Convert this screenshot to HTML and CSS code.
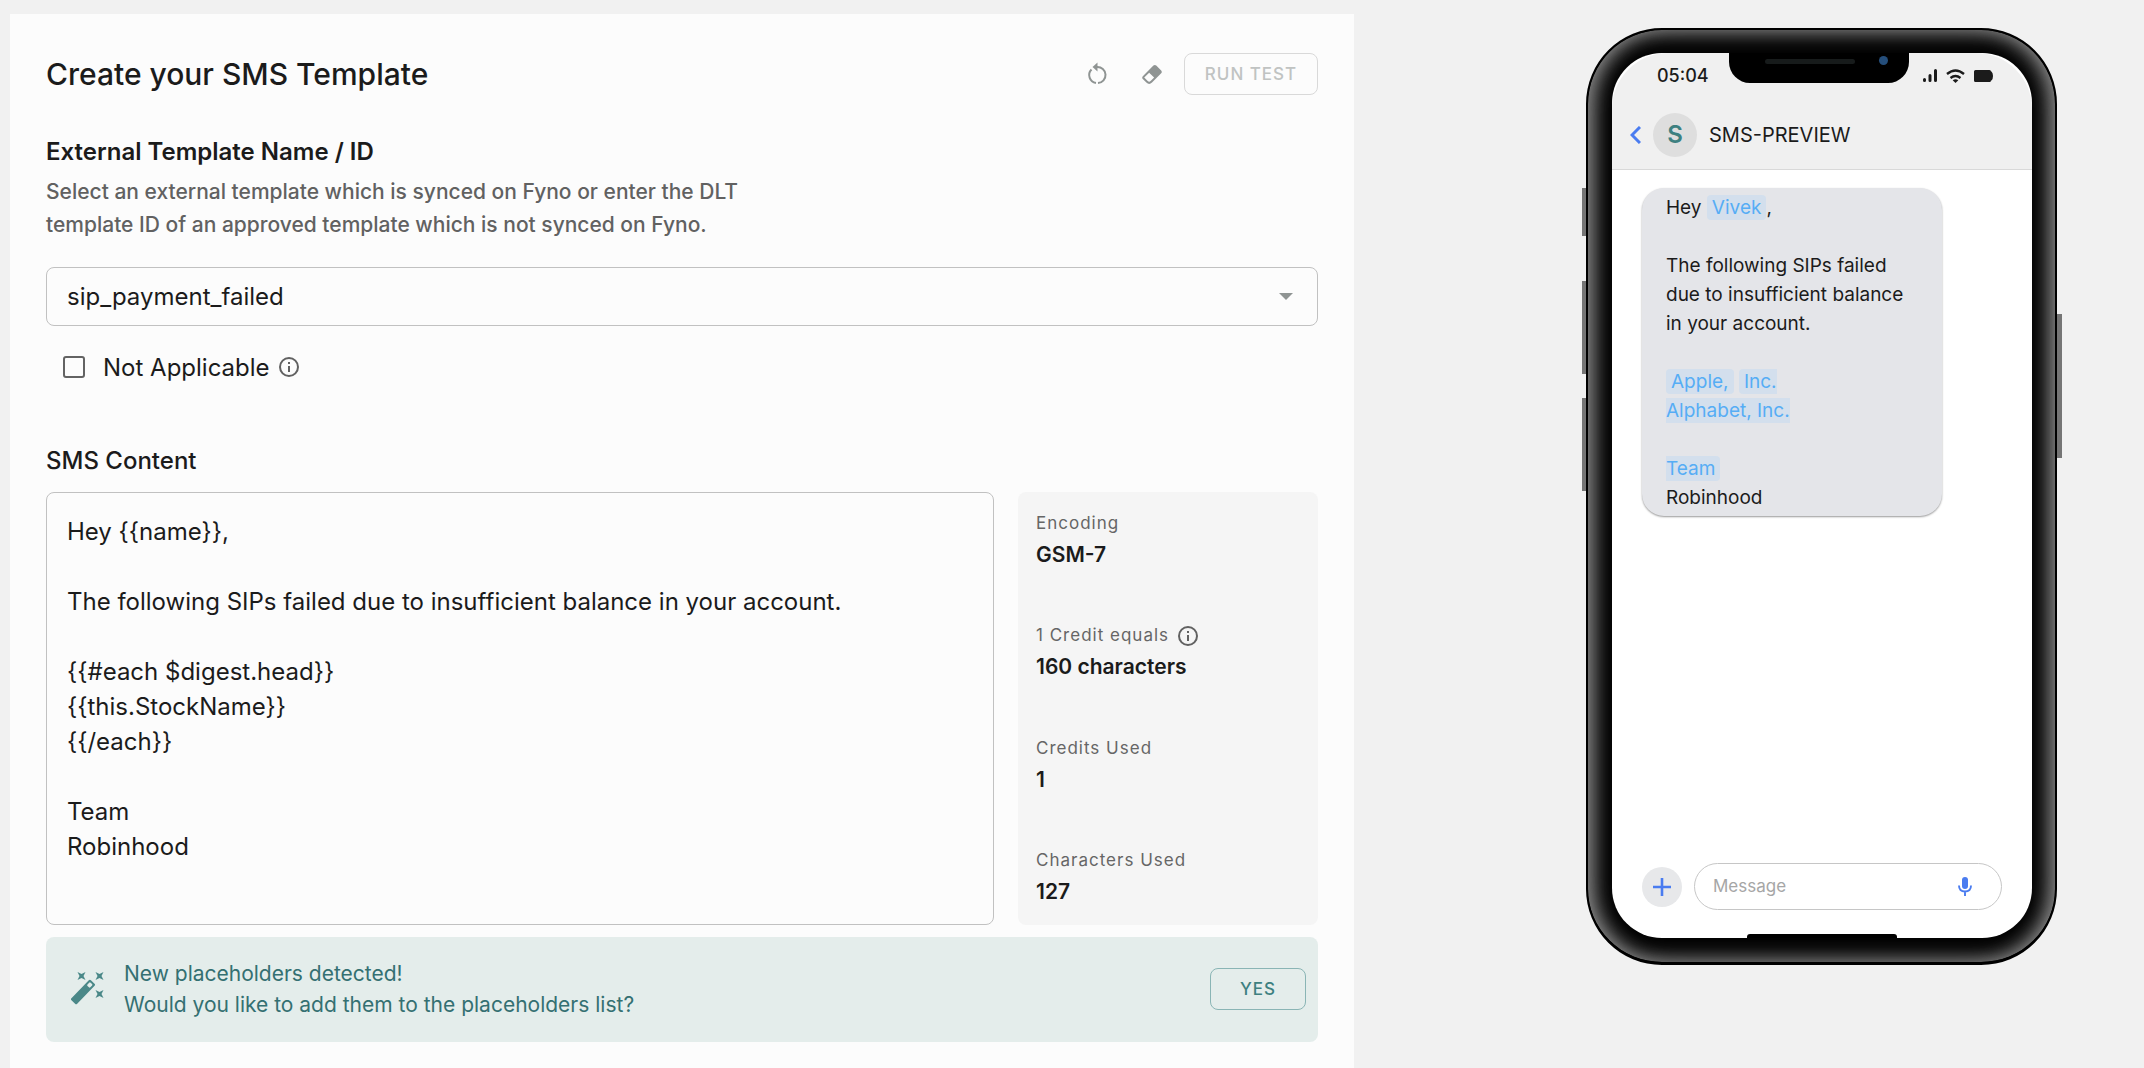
FILE: index.html
```html
<!DOCTYPE html>
<html lang="en">
<head>
<meta charset="utf-8">
<title>Create your SMS Template</title>
<link rel="stylesheet" href="styles.css">
</head>
<body>
<div class="page">
  <main class="editor">
    <header class="editor-header">
      <h1 class="title">Create your SMS Template</h1>
      <div class="actions">
        <button class="icon-button" type="button" aria-label="Reset">
          <svg class="icon" viewBox="0 0 24 24"><g fill="none" stroke="currentColor" stroke-width="2"><path d="M5.500 7.500A8 8 0 0 0 10 21"/><path d="M12 21A8 8 0 0 0 11 5"/></g><path d="M11.500 0.500v9L6.500 5z" fill="currentColor"/></svg>
        </button>
        <button class="icon-button" type="button" aria-label="Clear">
          <svg class="icon" viewBox="0 0 24 24" fill="currentColor"><path d="M16.24 3.56l4.95 4.94c.78.79.78 2.05 0 2.84L12 20.53a4.008 4.008 0 0 1-5.66 0L2.81 17c-.78-.79-.78-2.05 0-2.84l10.6-10.6c.79-.78 2.05-.78 2.83 0M4.22 15.58l3.54 3.53c.78.79 2.04.79 2.83 0l3.53-3.53-4.95-4.95z"/></svg>
        </button>
        <button class="button button-test" type="button" disabled>RUN TEST</button>
      </div>
    </header>

    <section class="template-section">
      <h2 class="section-title"><label for="template">External Template Name / ID</label></h2>
      <p class="section-text">Select an external template which is synced on Fyno or enter the DLT template ID of an approved template which is not synced on Fyno.</p>
      <div class="select-wrap">
        <select class="select" id="template"><option>sip_payment_failed</option></select>
        <svg class="select-arrow" viewBox="0 0 14 7" fill="currentColor"><path d="M0 0h14L7 7z"/></svg>
      </div>
      <div class="check-row">
        <input class="checkbox" type="checkbox" id="not-applicable">
        <label for="not-applicable">Not Applicable</label>
        <svg class="info" viewBox="0 0 20 20"><circle cx="10" cy="10" r="9" fill="none" stroke="currentColor" stroke-width="2"/><path d="M9 9h2v6H9zM9 5h2v2H9z" fill="currentColor"/></svg>
      </div>
    </section>

    <section class="content-section">
      <h2 class="section-title content-title"><label for="content">SMS Content</label></h2>
      <div class="content-grid">
        <textarea class="content-box" id="content" spellcheck="false">Hey {{name}},

The following SIPs failed due to insufficient balance in your account.

{{#each $digest.head}}
{{this.StockName}}
{{/each}}

Team
Robinhood</textarea>
        <dl class="stats">
          <div><dt>Encoding</dt><dd>GSM-7</dd></div>
          <div><dt>1 Credit equals <svg class="info" viewBox="0 0 20 20"><circle cx="10" cy="10" r="9" fill="none" stroke="currentColor" stroke-width="2"/><path d="M9 9h2v6H9zM9 5h2v2H9z" fill="currentColor"/></svg></dt><dd>160 characters</dd></div>
          <div><dt>Credits Used</dt><dd>1</dd></div>
          <div><dt>Characters Used</dt><dd>127</dd></div>
        </dl>
      </div>
      <div class="notice">
        <svg class="wand" viewBox="0 0 34 34" fill="currentColor"><g transform="translate(12 20) rotate(-46)"><rect x="-14" y="-4" width="28" height="8" rx="1.500"/><rect x="7.500" y="-2" width="4.500" height="4" rx="1" fill="#e4edeb"/></g><path d="M6.500 0l4 2 4-2-2 4 2 4-4-2-4 2 2-4zM24.500 0l4 2 4-2-2 4 2 4-4-2-4 2 2-4zM24.500 18l4 2 4-2-2 4 2 4-4-2-4 2 2-4z"/></svg>
        <p class="notice-text">New placeholders detected!<br>Would you like to add them to the placeholders list?</p>
        <button class="button button-yes" type="button">YES</button>
      </div>
    </section>
  </main>

  <aside class="preview">
    <div class="phone">
      <span class="key key-mute"></span>
      <span class="key key-up"></span>
      <span class="key key-down"></span>
      <span class="key key-power"></span>
      <div class="screen">
        <div class="notch"><span class="speaker"></span><span class="camera"></span></div>
        <header class="screen-header">
          <div class="status">
            <span>05:04</span>
            <div class="status-icons">
              <svg class="signal" viewBox="0 0 14 13" fill="none" stroke="currentColor" stroke-width="3" stroke-linecap="round"><path d="M1.500 10.500v1M7 6.500v5M12.500 1.500v10"/></svg>
              <svg class="wifi" viewBox="0 0 19 14"><path d="M1 5q8.500-7 17 0M4.500 9q5-3.800 10 0" fill="none" stroke="currentColor" stroke-width="2.400"/><path d="M6.700 11.200q2.800-2 5.600 0L9.500 14z" fill="currentColor"/></svg>
              <svg class="battery" viewBox="0 0 19 12" fill="currentColor"><path d="M1.500 0H15.500q1.500 0 1.500 1.500h.5Q19 3 19 6T17.500 10.500h-.5Q17 12 15.500 12H1.500Q0 12 0 10.500v-9Q0 0 1.500 0z"/></svg>
            </div>
          </div>
          <div class="contact">
            <button class="back" type="button" aria-label="Back"><svg viewBox="0 0 11 18" fill="none" stroke="currentColor" stroke-width="3"><path d="M10 1L2 9l8 8"/></svg></button>
            <span class="avatar">S</span>
            <span>SMS-PREVIEW</span>
          </div>
        </header>
        <div class="thread">
          <p class="bubble">Hey <mark>Vivek</mark>,

The following SIPs failed due to insufficient balance in your account.

<mark>Apple,</mark> <mark>Inc.
Alphabet, Inc.

Team</mark>
Robinhood</p>
        </div>
        <div class="composer">
          <button class="add" type="button" aria-label="Add"><svg viewBox="0 0 18 18" stroke="currentColor" stroke-width="2.600"><path d="M9 0v18M0 9h18"/></svg></button>
          <div class="message-wrap">
            <input class="message" type="text" placeholder="Message" aria-label="Message">
            <svg class="mic" viewBox="0 0 14 19"><rect x="4" y="0" width="6" height="12" rx="3" fill="currentColor"/><path d="M1 8.500q0 6 6 6t6-6M7 14.500V19" fill="none" stroke="currentColor" stroke-width="1.900"/></svg>
          </div>
        </div>
        <span class="home-bar"></span>
      </div>
    </div>
  </aside>
</div>
</body>
</html>
```
FILE: styles.css
```css
* {
  box-sizing: border-box;
}

body {
  margin: 0;
  background: #f1f1f1;
  color: #1b1b1b;
  font-family: Inter, "Liberation Sans", sans-serif;
  font-size: 24px;
}

h1, h2, p, dl, dd {
  margin: 0;
}

button, input, select, textarea {
  font: inherit;
  color: inherit;
}

svg {
  display: block;
  flex: none;
}

.page {
  display: grid;
  grid-template-columns: 1344fr 790fr;
  min-height: 100vh;
  padding: 14px 0 0 10px;
}

/* Editor */
.editor {
  padding: 39px 36px 24px;
  background: #fcfcfc;
}

.editor-header {
  display: flex;
  justify-content: space-between;
  align-items: center;
}

.title {
  font-size: 30px;
  font-weight: 500;
  line-height: 42px;
}

.actions {
  display: flex;
  align-items: center;
}

.icon-button {
  padding: 0;
  margin-right: 20px;
  border: 0;
  background: none;
  color: #8f9493;
}

.icon-button:first-child {
  margin-right: 30px;
}

.icon {
  width: 24px;
  height: 24px;
}

.button {
  height: 42px;
  padding: 0;
  border: 1px solid;
  border-radius: 8px;
  background: none;
  font-size: 17px;
  font-weight: 500;
  letter-spacing: 1px;
}

.button-test {
  width: 134px;
  border-color: #d9d9d9;
  color: #c0c3c2;
}

.button-yes {
  width: 96px;
  margin-left: auto;
  border-color: #8ab5b5;
  color: #3d8080;
}

.template-section {
  margin-top: 39px;
}

.section-title {
  font-size: 24px;
  font-weight: 600;
  line-height: 36px;
}

.section-text {
  max-width: 720px;
  margin-top: 5px;
  color: #616161;
  font-size: 21px;
  font-weight: 500;
  line-height: 33px;
}

.select-wrap {
  display: grid;
  align-items: center;
  margin-top: 26px;
}

.select-wrap > * {
  grid-area: 1 / 1;
}

.select {
  width: 100%;
  height: 59px;
  padding: 0 20px;
  border: 1px solid #c1c1c1;
  border-radius: 8px;
  appearance: none;
  background: none;
}

.select-arrow {
  width: 14px;
  height: 7px;
  margin-right: 25px;
  justify-self: end;
  color: #8f9493;
  pointer-events: none;
}

.check-row {
  display: flex;
  align-items: center;
  height: 36px;
  margin-top: 23px;
  padding-left: 17px;
}

.checkbox {
  width: 22px;
  height: 22px;
  margin: 0 18px 0 0;
  border: 2px solid #636363;
  border-radius: 3px;
  appearance: none;
}

.info {
  width: 20px;
  height: 20px;
  margin-left: 9px;
  color: #616161;
}

.content-section {
  margin-top: 58px;
}

.content-title {
  font-weight: 500;
}

.content-grid {
  display: grid;
  grid-template-columns: 1fr 300px;
  gap: 24px;
  margin-top: 13px;
}

.content-box {
  display: block;
  min-height: 433px;
  padding: 21px 20px;
  border: 1px solid #c1c1c1;
  border-radius: 8px;
  outline: 0;
  background: none;
  line-height: 35px;
  resize: none;
}

.stats {
  display: flex;
  flex-direction: column;
  justify-content: space-between;
  padding: 16px 18px 18px;
  border-radius: 8px;
  background: #f5f5f5;
}

.stats dt {
  display: flex;
  align-items: center;
  color: #666;
  font-size: 17px;
  line-height: 31px;
  letter-spacing: 1px;
}

.stats dd {
  font-size: 21px;
  font-weight: 600;
  line-height: 31px;
}

.notice {
  display: flex;
  align-items: center;
  gap: 19px;
  margin-top: 12px;
  padding: 21px 12px 22px 25px;
  border-radius: 8px;
  background: #e4edeb;
  color: #347072;
}

.notice-text {
  font-size: 21px;
  line-height: 31px;
}

.wand {
  width: 34px;
  height: 34px;
  color: #4a8888;
}

/* Phone preview */
.preview {
  display: flex;
  justify-content: flex-end;
  align-items: flex-start;
  padding: 14px 87px 24px;
}

.phone {
  position: relative;
  width: 471px;
  padding: 23px 23px 24px 24px;
  border: 2px solid #000;
  border-bottom-width: 3px;
  border-radius: 76px;
  background: #000;
  box-shadow: inset 0 0 24px #8a8a8a, inset 12px 0 24px -12px #999, inset -12px 0 24px -12px #999;
}

.key {
  position: absolute;
  left: -6px;
  width: 4px;
  background: #757575;
}

.key-mute {
  top: 158px;
  height: 48px;
}

.key-up {
  top: 251px;
  height: 93px;
}

.key-down {
  top: 368px;
  height: 93px;
}

.key-power {
  top: 284px;
  right: -7px;
  left: auto;
  width: 5px;
  height: 144px;
}

.screen {
  position: relative;
  display: flex;
  flex-direction: column;
  min-height: 885px;
  overflow: hidden;
  border-radius: 50px;
  background: #fff;
}

.notch {
  position: absolute;
  top: 0;
  left: 117px;
  width: 180px;
  height: 30px;
  border-radius: 0 0 21px 21px;
  background: #000;
}

.speaker {
  position: absolute;
  top: 6px;
  left: 36px;
  width: 90px;
  height: 5px;
  border-radius: 3px;
  background: #171b1b;
}

.camera {
  position: absolute;
  top: 3px;
  left: 150px;
  width: 9px;
  height: 9px;
  border-radius: 50%;
  background: #254e7b;
}

.screen-header {
  padding: 7px 0 12px;
  border-bottom: 1px solid #d9d9d9;
  border-radius: 56px 56px 0 0;
  background: #f0f0f0;
}

.status {
  display: flex;
  justify-content: space-between;
  align-items: center;
  padding: 0 39px 0 45px;
  font-size: 18px;
  font-weight: 500;
  line-height: 31px;
}

.status-icons {
  display: flex;
  align-items: center;
  gap: 9px;
}

.signal {
  width: 14px;
  height: 13px;
}

.wifi {
  width: 19px;
  height: 14px;
}

.battery {
  width: 19px;
  height: 12px;
}

.contact {
  display: flex;
  align-items: center;
  gap: 12px;
  margin-top: 22px;
  padding-left: 18px;
  font-size: 20px;
}

.back {
  width: 11px;
  padding: 0;
  border: 0;
  background: none;
  color: #4a7cf0;
}

.avatar {
  width: 44px;
  height: 44px;
  border-radius: 50%;
  background: #dedede;
  color: #3d8080;
  font-size: 24px;
  font-weight: 600;
  line-height: 44px;
  text-align: center;
}

.thread {
  flex: 1;
  padding: 18px 30px;
}

.bubble {
  width: 300px;
  padding: 5px 24px 4px;
  border-radius: 22px;
  background: #e4e5e9;
  box-shadow: 0 1px 2px #999;
  font-size: 19px;
  line-height: 29px;
  white-space: pre-wrap;
}

.bubble mark {
  padding: 1px 5px;
  border-radius: 4px;
  background: #d3dfed;
  color: #56adf5;
}

.composer {
  display: flex;
  align-items: center;
  gap: 12px;
  padding: 0 30px 28px;
}

.add {
  display: grid;
  flex: none;
  place-items: center;
  width: 40px;
  height: 40px;
  padding: 0;
  border: 0;
  border-radius: 50%;
  background: #e7e8ea;
  color: #4a7cf0;
}

.add svg {
  width: 18px;
  height: 18px;
}

.message-wrap {
  display: flex;
  flex: 1;
  align-items: center;
  min-width: 0;
  height: 47px;
  padding: 0 29px 0 18px;
  border: 1px solid #c6c6c6;
  border-radius: 24px;
}

.message {
  flex: 1;
  min-width: 0;
  padding: 0 0 2px;
  border: 0;
  outline: 0;
  background: none;
  font-size: 17px;
}

.message::placeholder {
  color: #a6a6a6;
}

.mic {
  width: 14px;
  height: 19px;
  color: #4a7cf0;
}

.home-bar {
  position: absolute;
  bottom: 0;
  left: 135px;
  width: 150px;
  height: 4px;
  border-radius: 3px 3px 0 0;
  background: #000;
}
```
